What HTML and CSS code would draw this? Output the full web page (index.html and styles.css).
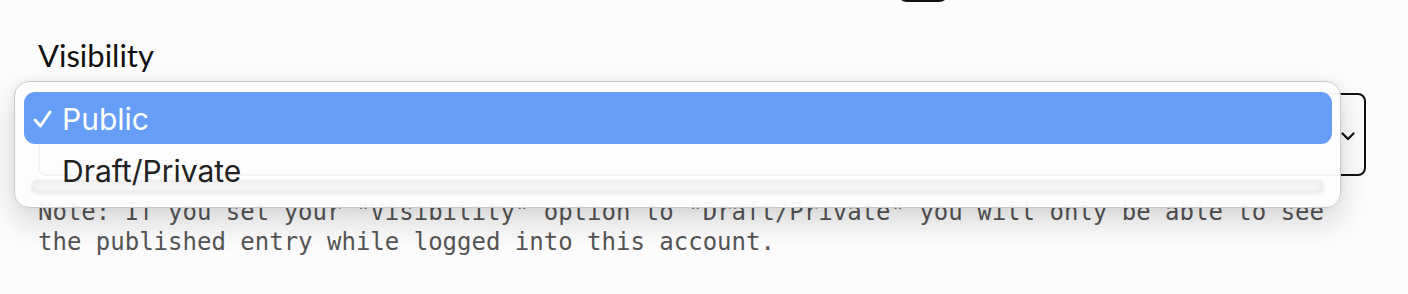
FILE: index.html
```html
<!DOCTYPE html>
<html lang="en">
<head>
<meta charset="utf-8">
<title>Visibility</title>
<link rel="stylesheet" href="styles.css">
</head>
<body>
<div class="page">
  <div class="topbar"><div class="top-btn"></div></div>
  <div class="field">
    <label class="label">Visibility</label>
    <div class="select">
      <svg class="chev" width="14" height="9" viewBox="0 0 14 9"><path d="M1.5 1.5 L7 7 L12.5 1.5" fill="none" stroke="#111" stroke-width="2.2" stroke-linecap="round" stroke-linejoin="round"/></svg>
    </div>
    <p class="note">Note: If you set your "Visibility" option to "Draft/Private" you will only be able to see the published entry while logged into this account.</p>
    <div class="menu">
      <div class="ghost-bar"></div>
      <div class="option selected">
        <span class="check"><svg width="19" height="18" viewBox="0 0 19 18"><path d="M2 10 L7.5 16 L17 2" fill="none" stroke="#fff" stroke-width="3" stroke-linecap="round" stroke-linejoin="round"/></svg></span>
        <span>Public</span>
      </div>
      <div class="option"><span class="check"></span><span>Draft/Private</span></div>
    </div>
  </div>
</div>
</body>
</html>
```
FILE: styles.css
```css
html, body {
  margin: 0;
  background: #fcfcfc;
}
.page {
  padding: 0 42px 0 38px;
  height: 294px;
  box-sizing: border-box;
  overflow: hidden;
}
.topbar {
  height: 35px;
  display: flex;
  padding-left: 859px;
}
.top-btn {
  width: 52px;
  height: 40px;
  margin-top: -38px;
  background: #111;
  border-radius: 10px;
}
.field {
  position: relative;
}
.label {
  display: block;
  font-family: Lato, "Liberation Sans", sans-serif;
  font-size: 31px;
  line-height: 40px;
  color: #111;
}
.select {
  margin-top: 18px;
  height: 83px;
  box-sizing: border-box;
  border: 2px solid #111;
  border-radius: 8px;
  display: flex;
  align-items: center;
  justify-content: flex-end;
  padding: 0 9px 0 24px;
}
.chev {
  margin-top: 4px;
}
.note {
  margin: 21px 0 0;
  font-family: "DejaVu Sans Mono", monospace;
  font-size: 24px;
  line-height: 30px;
  color: #555;
  max-width: 1300px;
}
.menu {
  position: absolute;
  left: -24px;
  top: 46px;
  width: 1327px;
  height: 127px;
  box-sizing: border-box;
  padding: 10px 8px 0 9px;
  border: 1px solid #c9c9c9;
  border-radius: 15px;
  background: rgba(253, 253, 253, 0.96);
  box-shadow: 0 14px 32px rgba(0, 0, 0, 0.15), 0 0 8px rgba(0, 0, 0, 0.06);
  font-family: Inter, "Noto Sans", sans-serif;
  font-size: 30px;
  color: #222;
}
.ghost-bar {
  position: absolute;
  left: 16px;
  right: 16px;
  top: 98px;
  height: 14px;
  border-radius: 8px;
  background: #f5f5f5;
  box-shadow: inset 0 0 4px 1px rgba(0, 0, 0, 0.09);
  filter: blur(1px);
}
.option {
  position: relative;
  height: 52px;
  display: flex;
  align-items: center;
  border-radius: 11px;
  padding-top: 2px;
  box-sizing: border-box;
}
.option.selected {
  background: #669df6;
  color: #fff;
}
.check {
  width: 38px;
  padding-left: 9px;
  box-sizing: border-box;
  display: flex;
  align-items: center;
}
```
